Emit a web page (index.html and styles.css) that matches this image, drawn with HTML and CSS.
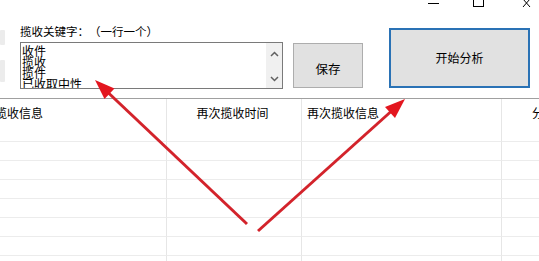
FILE: index.html
```html
<!DOCTYPE html>
<html lang="zh">
<head>
<meta charset="utf-8">
<title>揽收关键字</title>
<link rel="stylesheet" href="styles.css">
</head>
<body>
<div class="page">
  <div class="top">
    <div class="chrome">
      <svg class="ctl ctl-min" width="12" height="8" viewBox="0 0 12 8"><line x1="0" y1="3.5" x2="11" y2="3.5" stroke="#000" stroke-width="1"/></svg>
      <svg class="ctl ctl-max" width="12" height="8" viewBox="0 0 12 8"><rect x="0.5" y="-5" width="10" height="11.5" fill="none" stroke="#000" stroke-width="1"/></svg>
      <svg class="ctl ctl-close" width="10" height="8" viewBox="0 0 10 8"><path d="M1 -1 L8 7 M8 -1 L1 7" stroke="#000" stroke-width="1"/></svg>
    </div>
    <div class="main">
      <div class="stubs">
        <div class="stub stub-a"></div>
        <div class="stub stub-b"></div>
      </div>
      <div class="kw">
        <div class="kw-label">揽收关键字<span class="fw">：</span><span class="fw">（</span>一行一个<span class="fw">）</span></div>
        <div class="kw-box">
          <div class="kw-lines">
            <div>收件</div>
            <div>揽收</div>
            <div>揽件</div>
            <div>已收取中性</div>
          </div>
          <div class="kw-scroll">
            <svg width="9" height="6" viewBox="0 0 9 6"><path d="M1 5 L4.5 1.5 L8 5" fill="none" stroke="#606060" stroke-width="1.5"/></svg>
            <svg width="9" height="6" viewBox="0 0 9 6"><path d="M1 1 L4.5 4.5 L8 1" fill="none" stroke="#606060" stroke-width="1.5"/></svg>
          </div>
        </div>
      </div>
      <div class="btn btn-save">保存</div>
      <div class="btn btn-start">开始分析</div>
    </div>
  </div>
  <div class="grid">
    <div class="cell head c1">揽收信息</div>
    <div class="cell head c2">再次揽收时间</div>
    <div class="cell head c3">再次揽收信息</div>
    <div class="cell head c4">分</div>
    <div class="cell c1"></div><div class="cell c2"></div><div class="cell c3"></div><div class="cell c4"></div>
    <div class="cell c1"></div><div class="cell c2"></div><div class="cell c3"></div><div class="cell c4"></div>
    <div class="cell c1"></div><div class="cell c2"></div><div class="cell c3"></div><div class="cell c4"></div>
    <div class="cell c1"></div><div class="cell c2"></div><div class="cell c3"></div><div class="cell c4"></div>
    <div class="cell c1"></div><div class="cell c2"></div><div class="cell c3"></div><div class="cell c4"></div>
    <div class="cell c1"></div><div class="cell c2"></div><div class="cell c3"></div><div class="cell c4"></div>
    <div class="cell c1"></div><div class="cell c2"></div><div class="cell c3"></div><div class="cell c4"></div>
    <div class="cell c1"></div><div class="cell c2"></div><div class="cell c3"></div><div class="cell c4"></div>
  </div>
  <svg class="arrows" width="539" height="261" viewBox="0 0 539 261">
    <line x1="247" y1="224" x2="108" y2="92.5" stroke="#d3232b" stroke-width="3"/>
    <polygon points="95,80 114.5,88.5 104.5,99" fill="#e3161f"/>
    <line x1="258" y1="231" x2="391" y2="111.5" stroke="#d3232b" stroke-width="3"/>
    <polygon points="405,99 395,118 385,107" fill="#e3161f"/>
  </svg>
</div>
</body>
</html>
```

FILE: styles.css
```css
html, body {
  margin: 0;
  padding: 0;
  background: #ffffff;
}
body {
  font-family: "Noto Sans CJK SC", "Noto Sans", sans-serif;
  color: #000;
  overflow: hidden;
}
.page {
  position: relative;
  width: 539px;
  height: 261px;
  overflow: hidden;
}
.top {
  height: 98px;
  border-bottom: 1px solid #a0a0a0;
  box-sizing: content-box;
}
.chrome {
  height: 8px;
  display: flex;
  align-items: flex-start;
}
.ctl { display: block; }
.ctl-min { margin-left: 428px; }
.ctl-max { margin-left: 33px; }
.ctl-close { margin-left: 37px; }
.main {
  display: flex;
  align-items: flex-start;
}
.stubs {
  width: 5px;
  margin-top: 22px;
  display: flex;
  flex-direction: column;
  gap: 15px;
}
.stub {
  background: #ececec;
  border-radius: 1px;
}
.stub-a { height: 15px; }
.stub-b { height: 22px; }
.kw {
  margin-left: 15px;
  margin-top: 16px;
  display: flex;
  flex-direction: column;
}
.kw-label {
  font-size: 11.5px;
  line-height: 14px;
  height: 14px;
  white-space: nowrap;
}
.fw {
  display: inline-block;
  width: 11.5px;
  text-align: center;
}
.kw-box {
  margin-top: 4px;
  width: 263px;
  height: 47px;
  box-sizing: border-box;
  border: 1px solid #7a7a7a;
  display: flex;
  overflow: hidden;
}
.kw-lines {
  flex: 1;
  padding: 2px 0 0 1px;
  font-size: 12px;
  line-height: 11px;
  white-space: nowrap;
  overflow: hidden;
}
.kw-scroll {
  width: 16px;
  background: #f0f0f0;
  display: flex;
  flex-direction: column;
  justify-content: space-between;
  align-items: center;
  padding: 8px 0 6px;
  box-sizing: border-box;
}
.kw-scroll svg { display: block; }
.btn {
  background: #e1e1e1;
  box-sizing: border-box;
  display: flex;
  align-items: center;
  justify-content: center;
  font-size: 12.5px;
  white-space: nowrap;
}
.btn-save {
  margin-left: 10px;
  margin-top: 35px;
  width: 70px;
  height: 45px;
  border: 1px solid #adadad;
  padding-top: 5px;
}
.btn-start {
  margin-left: 26px;
  margin-top: 20px;
  width: 141px;
  height: 60px;
  border: 2px solid #2a72b5;
  font-size: 12px;
  padding-bottom: 2px;
}
.grid {
  display: grid;
  grid-template-columns: 167px 135px 200px 37px;
  grid-template-rows: 24px repeat(7, 19px) 19px;
}
.cell {
  box-sizing: border-box;
  border-right: 1px solid #e6e6e6;
  border-bottom: 1px solid #ececec;
  font-size: 12px;
  line-height: 14px;
  white-space: nowrap;
  overflow: hidden;
}
.cell.head {
  border-bottom: none;
  padding-top: 7px;
}
.cell.c4 { border-right: none; }
.head.c1 { text-indent: -5px; }
.head.c2 { text-align: center; padding-right: 3px; }
.head.c3 { padding-left: 5px; }
.head.c4 { padding-left: 30px; }
.arrows {
  position: absolute;
  left: 0;
  top: 0;
  pointer-events: none;
}
```
